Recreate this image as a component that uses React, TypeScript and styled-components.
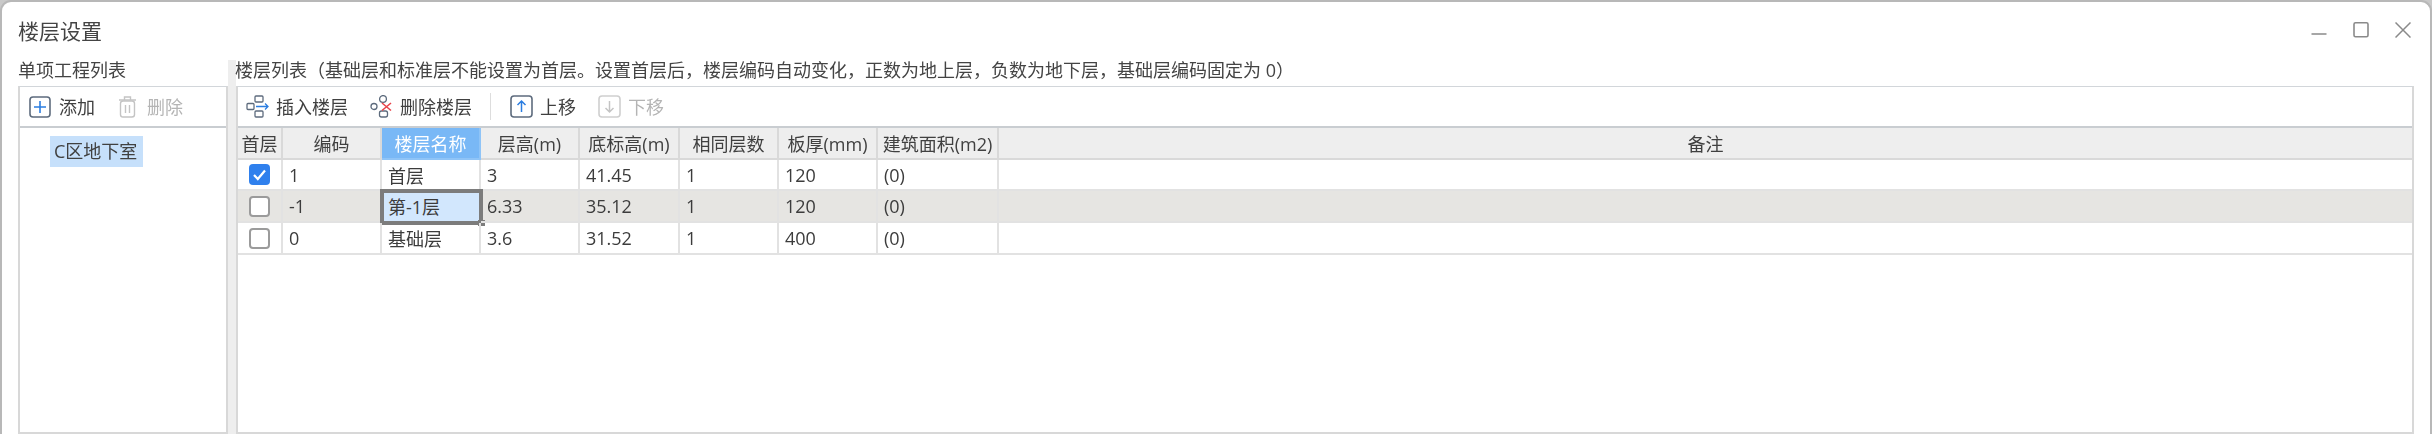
import React from 'react';
import styled, { createGlobalStyle } from 'styled-components';

const GlobalStyle = createGlobalStyle`
  html, body {
    margin: 0;
    padding: 0;
    height: 434px;
    overflow: hidden;
    background: #c9c9c9;
  }
  * { box-sizing: border-box; }
`;

const Window = styled.div`
  width: 2432px;
  height: 434px;
  display: flex;
  flex-direction: column;
  background: #fff;
  border: 2px solid #b8b8b8;
  border-bottom: 0;
  border-radius: 11px 11px 0 0;
  overflow: hidden;
  color: #3c3c3c;
  font-family: "Open Sans", "Noto Sans CJK SC", sans-serif;
  font-size: 18px;
  filter: blur(0.45px);
`;

const TitleBar = styled.div`
  height: 58px;
  flex: none;
  display: flex;
  align-items: center;
  justify-content: space-between;
  padding: 0 19px 0 16px;
`;

const Title = styled.div`
  font-size: 21px;
  line-height: 26px;
  margin-top: -1px;
  color: #444;
`;

const WindowControls = styled.div`
  display: flex;
  gap: 26px;
  margin-top: -3px;
`;

const Content = styled.div`
  flex: 1;
  min-height: 0;
  display: flex;
  padding: 0 16px;
`;

const Pane = styled.div<{ $width?: number }>`
  display: flex;
  flex-direction: column;
  min-width: 0;
  ${p => (p.$width ? `width: ${p.$width}px; flex: none;` : 'flex: 1;')}
`;

const PaneLabel = styled.div<{ $shift?: number }>`
  height: 26px;
  flex: none;
  line-height: 20px;
  white-space: nowrap;
  color: #444;
  margin-left: ${p => p.$shift ?? 0}px;
`;

const Splitter = styled.div`
  width: 8px;
  flex: none;
  background: #eeeeee;
`;

const Panel = styled.div`
  flex: 1;
  min-height: 0;
  display: flex;
  flex-direction: column;
  border: 2px solid #d8d8d8;
  border-top: 1px solid #d2d6da;
`;

const Toolbar = styled.div`
  height: 41px;
  flex: none;
  display: flex;
  align-items: center;
  padding-left: ${(p: { $pad: number }) => p.$pad}px;
  border-bottom: 2px solid #c9cdd1;
`;

const ToolButton = styled.div<{ $disabled?: boolean; $gap?: number; $after?: number }>`
  display: flex;
  align-items: center;
  gap: ${p => p.$gap ?? 7}px;
  margin-right: ${p => p.$after ?? 22}px;
  line-height: 24px;
  color: ${p => (p.$disabled ? '#b4b4b4' : '#404040')};
  svg { display: block; flex: none; }
`;

const ToolDivider = styled.div`
  width: 1px;
  height: 27px;
  background: #dddddd;
  margin: 0 19px 0 -4px;
`;

const TreeItem = styled.div`
  align-self: flex-start;
  margin: 8px 0 0 30px;
  padding: 0 6px 0 4px;
  height: 31px;
  line-height: 30px;
  background: #c6e0fb;
  color: #404040;
`;

const Table = styled.div`
  display: flex;
  flex-direction: column;
`;

const Row = styled.div<{ $shade?: boolean }>`
  display: grid;
  grid-template-columns: 45px 99px 99px 99px 100px 99px 99px 121px 1fr;
  height: 32px;
  background: ${p => (p.$shade ? '#e6e5e2' : '#fff')};
  &[data-first='true'] { height: 31px; }
`;

const HeaderCell = styled.div<{ $active?: boolean }>`
  display: flex;
  align-items: center;
  justify-content: center;
  white-space: nowrap;
  background: ${p => (p.$active ? '#79b8f6' : '#eeeeee')};
  color: ${p => (p.$active ? '#ffffff' : '#404040')};
  border-right: 2px solid ${p => (p.$active ? '#8fc4f7' : '#d9d9d9')};
  border-bottom: 2px solid ${p => (p.$active ? '#8fc4f7' : '#d9d9d9')};
  &:last-child { border-right: 0; }
`;

const Cell = styled.div<{ $editing?: boolean }>`
  position: relative;
  display: flex;
  align-items: center;
  padding-left: 6px;
  white-space: nowrap;
  border-right: 2px solid #e2e2e2;
  border-bottom: 2px solid #e2e2e2;
  background: ${p => (p.$editing ? '#d2e7fd' : 'transparent')};
  &:last-child { border-right: 0; }
`;

const CheckCell = styled(Cell)`
  padding-left: 11px;
`;

const EditFrame = styled.div`
  position: absolute;
  top: -2px;
  left: -2px;
  right: -4px;
  bottom: -4px;
  border: 4px solid #7c7c7c;
`;

const EditHandle = styled.div`
  position: absolute;
  right: -6px;
  bottom: -5px;
  width: 7px;
  height: 6px;
  background: #7c7c7c;
`;

const CheckBox = styled.div<{ $checked?: boolean }>`
  width: 21px;
  height: 21px;
  border-radius: 4px;
  display: flex;
  align-items: center;
  justify-content: center;
  background: ${p => (p.$checked ? '#2f80ed' : '#fff')};
  border: ${p => (p.$checked ? '0' : '2px solid #9b9b9b')};
`;

const Icon: React.FC<{ size?: number; height?: number; children: React.ReactNode }> = ({ size = 22, height, children }) => (
  <svg width={size} height={height ?? size} viewBox={`0 0 ${size} ${height ?? size}`} fill="none">
    {children}
  </svg>
);

const floors = [
  { code: '1', name: '首层', height: '3', base: '41.45', same: '1', slab: '120', area: '(0)', first: true },
  { code: '-1', name: '第-1层', height: '6.33', base: '35.12', same: '1', slab: '120', area: '(0)', editing: true },
  { code: '0', name: '基础层', height: '3.6', base: '31.52', same: '1', slab: '400', area: '(0)' },
];

const columns = ['首层', '编码', '楼层名称', '层高(m)', '底标高(m)', '相同层数', '板厚(mm)', '建筑面积(m2)', '备注'];

const App: React.FC = () => (
  <>
    <GlobalStyle />
    <Window>
      <TitleBar>
        <Title>楼层设置</Title>
        <WindowControls>
          <Icon size={16}>
            <path d="M0.5 12h15" stroke="#8a8a8a" strokeWidth="1.5" />
          </Icon>
          <Icon size={16}>
            <rect x="1" y="0.8" width="14" height="14" rx="1.5" stroke="#8a8a8a" strokeWidth="1.6" />
          </Icon>
          <Icon size={16}>
            <path d="M0.5 0.5l15 15M15.5 0.5l-15 15" stroke="#8a8a8a" strokeWidth="1.5" />
          </Icon>
        </WindowControls>
      </TitleBar>
      <Content>
        <Pane $width={210}>
          <PaneLabel>单项工程列表</PaneLabel>
          <Panel>
            <Toolbar $pad={9}>
              <ToolButton $after={23} $gap={8}>
                <Icon>
                  <rect x="1" y="1" width="20" height="20" rx="3" stroke="#5d6b7d" strokeWidth="1.6" />
                  <path d="M11 5v12M5 11h12" stroke="#2b7de0" strokeWidth="1.6" />
                </Icon>
                添加
              </ToolButton>
              <ToolButton $disabled $gap={10}>
                <Icon size={19} height={22}>
                  <path d="M1 4h17M6.5 3.5V1h6v2.5" stroke="#c4c4c4" strokeWidth="1.4" />
                  <rect x="2.5" y="5" width="14" height="16" rx="2.5" stroke="#c4c4c4" strokeWidth="1.4" />
                  <path d="M7.5 9v8M11.5 9v8" stroke="#c4c4c4" strokeWidth="1.4" />
                </Icon>
                删除
              </ToolButton>
            </Toolbar>
            <TreeItem>C区地下室</TreeItem>
          </Panel>
        </Pane>
        <Splitter />
        <Pane>
          <PaneLabel $shift={-1}>楼层列表（基础层和标准层不能设置为首层。设置首层后，楼层编码自动变化，正数为地上层，负数为地下层，基础层编码固定为 0）</PaneLabel>
          <Panel>
            <Toolbar $pad={8}>
              <ToolButton>
                <Icon size={23}>
                  <rect x="9" y="1" width="8" height="6" rx="1" stroke="#5d6b7d" strokeWidth="1.3" />
                  <rect x="1" y="8.5" width="7" height="6" rx="1" stroke="#5d6b7d" strokeWidth="1.3" />
                  <rect x="9" y="16" width="8" height="6" rx="1" stroke="#5d6b7d" strokeWidth="1.3" />
                  <path d="M10 11.5h12M19 8.5l3 3-3 3" stroke="#2b7de0" strokeWidth="1.3" />
                </Icon>
                插入楼层
              </ToolButton>
              <ToolButton>
                <Icon size={23}>
                  <circle cx="13" cy="4" r="3.4" stroke="#5d6b7d" strokeWidth="1.3" />
                  <circle cx="4" cy="11.5" r="3" stroke="#5d6b7d" strokeWidth="1.3" />
                  <rect x="9.5" y="16" width="8" height="6" rx="2" stroke="#5d6b7d" strokeWidth="1.3" />
                  <path d="M12 8l9 7.5M21 8l-9 7.5" stroke="#e8434a" strokeWidth="1.6" />
                </Icon>
                删除楼层
              </ToolButton>
              <ToolDivider />
              <ToolButton $after={22}>
                <Icon size={23}>
                  <rect x="1" y="1" width="21" height="21" rx="3" stroke="#5d6b7d" strokeWidth="1.6" />
                  <path d="M11.5 17V6M7.5 10l4-4 4 4" stroke="#2b7de0" strokeWidth="1.5" />
                </Icon>
                上移
              </ToolButton>
              <ToolButton $disabled>
                <Icon size={23}>
                  <rect x="1" y="1" width="21" height="21" rx="3" stroke="#cfcfcf" strokeWidth="1.6" />
                  <path d="M11.5 6v11M7.5 13l4 4 4-4" stroke="#c4c4c4" strokeWidth="1.5" />
                </Icon>
                下移
              </ToolButton>
            </Toolbar>
            <Table>
              <Row>
                {columns.map(name => (
                  <HeaderCell key={name} $active={name === '楼层名称'}>
                    {name}
                  </HeaderCell>
                ))}
              </Row>
              {floors.map((floor, index) => (
                <Row key={floor.code} $shade={floor.editing} data-first={index === 0}>
                  <CheckCell>
                    <CheckBox $checked={floor.first}>
                      {floor.first && (
                        <Icon size={15}>
                          <path d="M2 8l3.8 4L13 3.5" stroke="#fff" strokeWidth="2.2" />
                        </Icon>
                      )}
                    </CheckBox>
                  </CheckCell>
                  <Cell>{floor.code}</Cell>
                  <Cell $editing={floor.editing}>
                    {floor.name}
                    {floor.editing && <EditFrame />}
                    {floor.editing && <EditHandle />}
                  </Cell>
                  <Cell>{floor.height}</Cell>
                  <Cell>{floor.base}</Cell>
                  <Cell>{floor.same}</Cell>
                  <Cell>{floor.slab}</Cell>
                  <Cell>{floor.area}</Cell>
                  <Cell />
                </Row>
              ))}
            </Table>
          </Panel>
        </Pane>
      </Content>
    </Window>
  </>
);

export default App;
